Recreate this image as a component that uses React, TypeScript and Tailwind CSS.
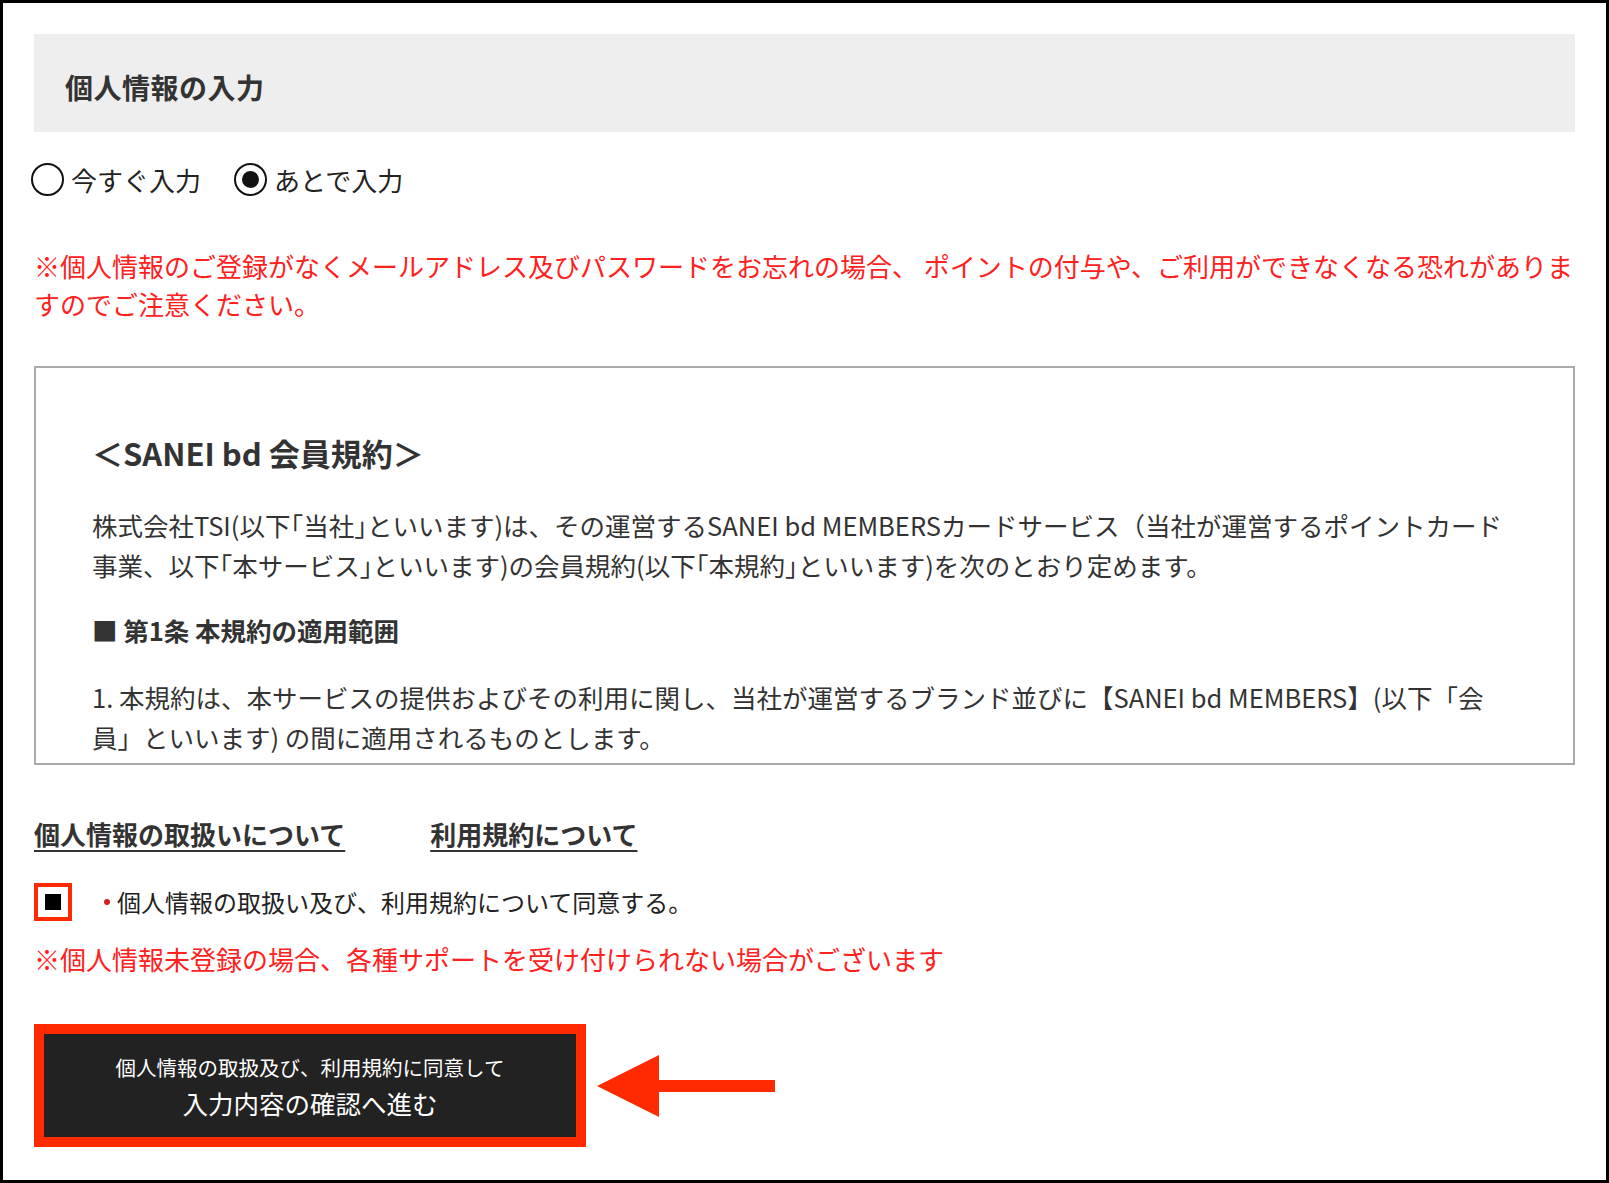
import React, { useState } from 'react';

const FONT = "font-['Noto_Sans_CJK_JP',sans-serif]";

const Radio: React.FC<{ checked: boolean; label: string; onClick: () => void }> = ({ checked, label, onClick }) => (
  <button type="button" onClick={onClick} className="flex items-center gap-[7px]">
    <span className="w-[33px] h-[33px] rounded-full border-[2px] border-[#111] bg-white flex items-center justify-center">
      {checked && <span className="w-[17px] h-[17px] rounded-full bg-[#111]" />}
    </span>
    <span className="text-[26px] leading-[32px] text-[#222]">{label}</span>
  </button>
);

const App: React.FC = () => {
  const [inputNow, setInputNow] = useState(false);
  const [agreed, setAgreed] = useState(true);

  return (
    <div className={`${FONT} w-[1609px] h-[1183px] box-border border-[3px] border-black bg-white px-[31px] pt-[31px] overflow-hidden`}>
      {/* Section header */}
      <div className="h-[98px] bg-[#eeeeee] flex items-center pl-[31px] pt-[7px]">
        <h2 className="text-[28px] font-bold text-[#333] tracking-[0.5px]">個人情報の入力</h2>
      </div>

      {/* Input timing */}
      <div className="mt-[31px] -ml-[3px] flex items-center gap-[33px]">
        <Radio checked={inputNow} label="今すぐ入力" onClick={() => setInputNow(true)} />
        <Radio checked={!inputNow} label="あとで入力" onClick={() => setInputNow(false)} />
      </div>

      <p className="mt-[51px] text-[26px] leading-[38px] text-[#ff2020]">
        ※個人情報のご登録がなくメールアドレス及びパスワードをお忘れの場合、 ポイントの付与や、ご利用ができなくなる恐れがありま
        <br />
        すのでご注意ください。
      </p>

      {/* Terms box */}
      <div className="mt-[43px] h-[399px] border-[2px] border-[#aaaaaa] px-[56px] pt-[63px] overflow-hidden text-[#333]">
        <h3 className="text-[31px] leading-[44px] font-bold">＜SANEI bd 会員規約＞</h3>
        <p className="mt-[30px] text-[25.5px] leading-[40px]">
          株式会社TSI(以下｢当社｣といいます)は、その運営するSANEI bd MEMBERSカードサービス（当社が運営するポイントカード
          <br />
          事業、以下｢本サービス｣といいます)の会員規約(以下｢本規約｣といいます)を次のとおり定めます。
        </p>
        <h4 className="mt-[25px] text-[25.5px] leading-[40px] font-bold">■ 第1条 本規約の適用範囲</h4>
        <p className="mt-[27px] text-[25.5px] leading-[40px]">
          1. 本規約は、本サービスの提供およびその利用に関し、当社が運営するブランド並びに【SANEI bd MEMBERS】(以下「会
          <br />
          員」といいます) の間に適用されるものとします。
        </p>
      </div>

      {/* Links */}
      <div className="mt-[51px] flex items-center gap-[85px]">
        <a href="#privacy" className="text-[26px] leading-[36px] font-bold text-[#333] underline underline-offset-[5px] decoration-[2px]">
          個人情報の取扱いについて
        </a>
        <a href="#terms" className="text-[26px] leading-[36px] font-bold text-[#333] underline underline-offset-[5px] decoration-[2px]">
          利用規約について
        </a>
      </div>

      {/* Agreement */}
      <div className="mt-[31px] flex items-center">
        <button
          type="button"
          onClick={() => setAgreed(!agreed)}
          className="w-[38px] h-[38px] border-[4px] border-[#ff2a00] bg-white flex items-center justify-center"
        >
          {agreed && <span className="w-[16px] h-[16px] bg-black" />}
        </button>
        <span className="ml-[32px] w-[6px] h-[6px] rounded-full bg-[#d42020]" />
        <span className="ml-[7px] text-[24px] leading-[36px] text-[#222]">個人情報の取扱い及び、利用規約について同意する。</span>
      </div>

      <p className="mt-[20px] text-[26px] leading-[36px] text-[#ff2020]">
        ※個人情報未登録の場合、各種サポートを受け付けられない場合がございます
      </p>

      {/* Submit */}
      <div className="mt-[47px] flex items-center">
        <button
          type="button"
          className="w-[552px] h-[123px] border-[10px] border-[#ff2a00] bg-[#222222] text-white flex flex-col items-center justify-center"
        >
          <span className="text-[20.5px] leading-[34px]">個人情報の取扱及び、利用規約に同意して</span>
          <span className="text-[25.5px] leading-[38px]">入力内容の確認へ進む</span>
        </button>
        <svg width="178" height="62" viewBox="0 0 178 62" className="ml-[11px]">
          <polygon points="0,31 62,0 62,25 178,25 178,37 62,37 62,62" fill="#ff2a00" />
        </svg>
      </div>
    </div>
  );
};

export default App;
